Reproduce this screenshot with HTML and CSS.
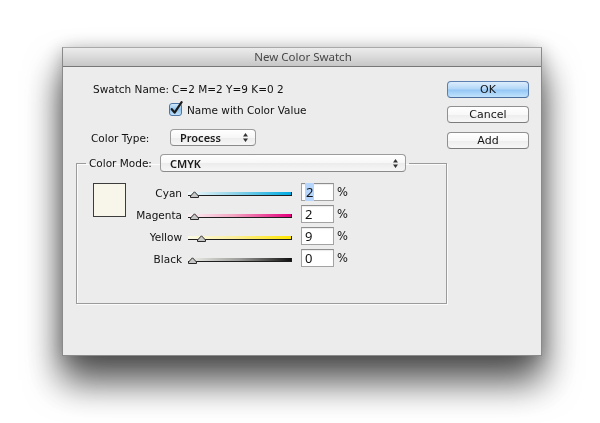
FILE: index.html
```html
<!DOCTYPE html>
<html lang="en">
<head>
<meta charset="utf-8">
<title>New Color Swatch</title>
<link rel="stylesheet" href="styles.css">
</head>
<body>
<div class="stage">
<div class="window">
  <div class="titlebar">New Color Swatch</div>
  <div class="body">
    <div class="main">
      <div class="name-row"><span class="name-label">Swatch Name:</span><span class="name-value">C=2 M=2 Y=9 K=0 2</span></div>
      <label class="check-row">
        <span class="checkbox">
          <svg width="15" height="15" viewBox="0 0 15 15">
            <defs>
              <linearGradient id="cbg" x1="0" y1="0" x2="0" y2="1">
                <stop offset="0" stop-color="#d7ebfb"/>
                <stop offset="0.5" stop-color="#8fc3ef"/>
                <stop offset="1" stop-color="#c3e2fb"/>
              </linearGradient>
            </defs>
            <rect x="0.5" y="2.5" width="12" height="12" rx="2.5" fill="url(#cbg)" stroke="#4f76a6"/>
            <path d="M2.8 8.2 L5.6 11.6 L12.6 1.2" fill="none" stroke="#1b1b1b" stroke-width="2.2" stroke-linecap="round" stroke-linejoin="round"/>
          </svg>
        </span>
        <span class="check-text">Name with Color Value</span>
      </label>
      <div class="type-row">
        <span class="type-label">Color Type:</span>
        <div class="popup popup-type">
          <span class="popup-text">Process</span>
          <svg class="popup-arrows" width="7" height="11" viewBox="0 0 7 11"><path d="M3.5 1 L6 4.5 H1 Z M3.5 10 L6 6.5 H1 Z" fill="#333"/></svg>
        </div>
      </div>
      <fieldset class="group">
        <legend class="group-head">
          <span class="mode-label">Color Mode:</span>
          <div class="popup popup-mode">
            <span class="popup-text">CMYK</span>
            <svg class="popup-arrows" width="7" height="11" viewBox="0 0 7 11"><path d="M3.5 1 L6 4.5 H1 Z M3.5 10 L6 6.5 H1 Z" fill="#333"/></svg>
          </div>
        </legend>
        <div class="mix">
          <div class="swatch"></div>
          <div class="channels">
            <div class="channel">
              <span class="ch-label">Cyan</span>
              <div class="slider">
                <div class="track track-cyan"></div>
                <svg class="thumb" style="left:2%" width="10" height="7" viewBox="0 0 10 7"><path d="M0.5 6.5 L0.5 5 L4.5 0.8 L8.5 5 L8.5 6.5 Z" fill="#c8c8c8" stroke="#2a2a2a"/></svg>
              </div>
              <div class="field"><span class="sel">2</span></div>
              <span class="pct">%</span>
            </div>
            <div class="channel">
              <span class="ch-label">Magenta</span>
              <div class="slider">
                <div class="track track-magenta"></div>
                <svg class="thumb" style="left:2%" width="10" height="7" viewBox="0 0 10 7"><path d="M0.5 6.5 L0.5 5 L4.5 0.8 L8.5 5 L8.5 6.5 Z" fill="#c8c8c8" stroke="#2a2a2a"/></svg>
              </div>
              <div class="field"><span>2</span></div>
              <span class="pct">%</span>
            </div>
            <div class="channel">
              <span class="ch-label">Yellow</span>
              <div class="slider">
                <div class="track track-yellow"></div>
                <svg class="thumb" style="left:9%" width="10" height="7" viewBox="0 0 10 7"><path d="M0.5 6.5 L0.5 5 L4.5 0.8 L8.5 5 L8.5 6.5 Z" fill="#c8c8c8" stroke="#2a2a2a"/></svg>
              </div>
              <div class="field"><span>9</span></div>
              <span class="pct">%</span>
            </div>
            <div class="channel">
              <span class="ch-label">Black</span>
              <div class="slider">
                <div class="track track-black"></div>
                <svg class="thumb" style="left:0%" width="10" height="7" viewBox="0 0 10 7"><path d="M0.5 6.5 L0.5 5 L4.5 0.8 L8.5 5 L8.5 6.5 Z" fill="#c8c8c8" stroke="#2a2a2a"/></svg>
              </div>
              <div class="field"><span>0</span></div>
              <span class="pct">%</span>
            </div>
          </div>
        </div>
      </fieldset>
    </div>
    <div class="buttons">
      <button class="btn btn-default">OK</button>
      <button class="btn">Cancel</button>
      <button class="btn btn-add">Add</button>
    </div>
  </div>
</div>
</div>
</body>
</html>
```

FILE: styles.css
```css
html, body {
  margin: 0;
  padding: 0;
  background: #ffffff;
}

body {
  font-family: "DejaVu Sans", "Noto Sans", sans-serif;
  font-size: 10.5px;
  color: #111111;
}

.stage {
  width: 600px;
  height: 423px;
  box-sizing: border-box;
  padding: 47px 0 0 62px;
  background: #ffffff;
}

.window {
  position: relative;
  width: 480px;
  height: 309px;
  box-sizing: border-box;
  border: 1px solid #8a8a8a;
  border-top-color: #a9a9a9;
  background: #ececec;
  display: flex;
  flex-direction: column;
  filter: drop-shadow(0 24px 18px rgba(0, 0, 0, 0.62)) drop-shadow(0 3px 9px rgba(0, 0, 0, 0.28));
}

.titlebar {
  height: 18px;
  line-height: 18px;
  border-bottom: 1px solid #777777;
  background: linear-gradient(to bottom, #ececec 0%, #dcdcdc 45%, #c6c6c6 100%);
  text-align: center;
  font-family: "Noto Sans", "DejaVu Sans", sans-serif;
  font-size: 11.5px;
  color: #474747;
  padding-left: 2px;
}

.body {
  flex: 1;
  display: flex;
  background: #ececec;
}

.main {
  flex: 1;
  display: flex;
  flex-direction: column;
}

.name-row {
  margin-top: 14px;
  height: 16px;
  line-height: 16px;
  padding-left: 30px;
  display: flex;
}

.name-label {
  width: 79px;
}

.check-row {
  margin-top: 5px;
  height: 16px;
  padding-left: 106px;
  display: flex;
  align-items: center;
}

.checkbox {
  width: 15px;
  height: 15px;
  display: block;
  margin-top: -3px;
}

.checkbox svg {
  display: block;
}

.check-text {
  margin-left: 3px;
  line-height: 16px;
}

.type-row {
  margin-top: 11px;
  height: 17px;
  padding-left: 28px;
  display: flex;
  align-items: center;
}

.type-label {
  width: 79px;
}

.popup {
  height: 17px;
  box-sizing: border-box;
  border: 1px solid #9c9c9c;
  border-bottom-color: #8a8a8a;
  border-radius: 4px;
  background: linear-gradient(to bottom, #ffffff 0%, #f7f7f7 50%, #ececec 51%, #f6f6f6 100%);
  display: flex;
  align-items: center;
  justify-content: space-between;
  padding: 0 6px 0 9px;
}

.popup-text {
  font-family: "Noto Sans", "DejaVu Sans", sans-serif;
  font-size: 11px;
  font-weight: 600;
  color: #1c1c1c;
  line-height: 15px;
}

.popup-arrows {
  display: block;
}

.popup-type {
  width: 86px;
}

.group {
  margin: 8px 0 0 13px;
  width: 371px;
  box-sizing: border-box;
  border: 1px solid #9b9b9b;
  box-shadow: inset 1px 1px 0 #fbfbfb, 1px 1px 0 #fbfbfb;
  padding: 11px 0 36px 9px;
  min-width: 0;
}

.group-head {
  display: flex;
  align-items: center;
  padding: 0 3px;
  height: 18px;
}

.mode-label {
  width: 71px;
}

.popup-mode {
  width: 246px;
  height: 18px;
  padding-left: 9px;
}

.mix {
  display: flex;
  align-items: flex-start;
}

.swatch {
  width: 33px;
  height: 34px;
  box-sizing: border-box;
  margin-left: 7px;
  border: 1px solid #3c3c3c;
  background: #f8f5ea;
}

.channels {
  display: flex;
  flex-direction: column;
  gap: 4px;
}

.channel {
  display: flex;
  align-items: center;
  height: 18px;
}

.ch-label {
  width: 56px;
  text-align: right;
  line-height: 18px;
  padding-top: 1px;
}

.slider {
  position: relative;
  width: 104px;
  height: 18px;
  margin-left: 6px;
}

.track {
  margin-top: 9px;
  height: 4px;
  box-sizing: border-box;
  border-bottom: 1px solid #1e1e1e;
  border-right: 1px solid #1e1e1e;
}

.track-cyan {
  background: linear-gradient(to right, #f4fafb 0%, #8fd3e8 45%, #00abe2 100%);
}

.track-magenta {
  background: linear-gradient(to right, #fcf2f5 0%, #f3a3c0 45%, #e4007c 100%);
}

.track-yellow {
  background: linear-gradient(to right, #fbf9e8 0%, #fbee9a 45%, #ffe600 100%);
}

.track-black {
  background: linear-gradient(to right, #f1f1ec 0%, #9c9c9a 50%, #111111 100%);
}

.thumb {
  position: absolute;
  top: 8px;
  display: block;
}

.field {
  width: 33px;
  height: 18px;
  box-sizing: border-box;
  margin-left: 9px;
  border: 1px solid #a3a3a3;
  border-top-color: #8e8e8e;
  background: #ffffff;
  box-shadow: inset 0 1px 1px rgba(0, 0, 0, 0.08);
  font-family: "Noto Sans", "DejaVu Sans", sans-serif;
  font-size: 13px;
  line-height: 16px;
  padding-left: 3px;
  color: #111111;
}

.sel {
  background: #b5d5fd;
  padding: 0 1px;
}

.pct {
  margin-left: 3px;
  font-size: 11.5px;
}

.buttons {
  width: 82px;
  margin-right: 13px;
  padding-top: 14px;
  display: flex;
  flex-direction: column;
  gap: 8px;
}

.btn {
  width: 82px;
  height: 17px;
  box-sizing: border-box;
  margin: 0;
  padding: 0;
  border: 1px solid #909090;
  border-bottom-color: #7c7c7c;
  border-radius: 4px;
  background: linear-gradient(to bottom, #ffffff 0%, #f8f8f8 50%, #ededed 51%, #f7f7f7 100%);
  font-family: "DejaVu Sans", "Noto Sans", sans-serif;
  font-size: 11px;
  line-height: 15px;
  color: #141414;
}

.btn-add {
  margin-top: 1px;
}

.btn-default {
  border-color: #5a7fb0;
  border-bottom-color: #4b6e9e;
  background: linear-gradient(to bottom, #dcedfc 0%, #b1d6f8 48%, #93c6f5 52%, #c2e3fc 100%);
}
```
